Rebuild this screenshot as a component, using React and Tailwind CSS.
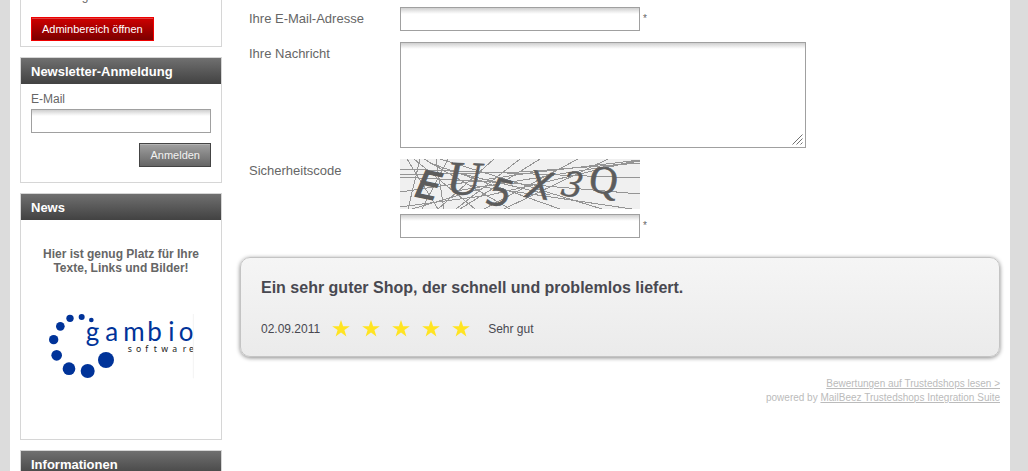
import React from "react";

const field =
  "block border border-[#a0a0a0] bg-white bg-[linear-gradient(to_bottom,#cfcfcf_0px,#f0f0f0_4px,#ffffff_6px)] px-1 text-[13px] text-[#666] outline-none";

function Box({ title, children }) {
  return (
    <section className="border border-[#d6d6d6]">
      {title && (
        <h2 className="h-[26px] bg-linear-to-b from-[#707070] to-[#424242] px-[10px] text-[13px] leading-[27px] font-bold text-white">
          {title}
        </h2>
      )}
      {children}
    </section>
  );
}

const dots = [
  [184, 255, 7],
  [155, 246, 9],
  [120, 250, 11],
  [91, 274, 13],
  [71, 314, 14],
  [80, 361, 16],
  [117, 401, 19],
  [173, 408, 21],
  [228, 375, 24],
];

function GambioLogo() {
  return (
    <svg viewBox="48 225 450 210" className="h-[70px] w-[150px]" role="img" aria-label="gambio software">
      <g fill="#003399">
        {dots.map(([x, y, r]) => (
          <circle key={x} cx={x} cy={y} r={r} />
        ))}
        <text x="167 226 280 352 415 446" y="319" fontFamily="Lato, sans-serif" fontSize="78">
          gambio
        </text>
      </g>
      <text x="293 318 346 371 394 427 458 477" y="352" fill="#222" fontFamily="'Noto Sans', sans-serif" fontSize="26">
        software
      </text>
      <path d="M490 237V430" stroke="#f3f3f3" strokeWidth="3" />
    </svg>
  );
}

const lines = [
  "M0 10 L240 19", "M0 16 L120 13 L240 4", "M0 18 L110 24 L240 35", "M0 33 L130 14 L240 1",
  "M0 48 L90 36 L235 2", "M7 0 L38 50", "M14 0 L75 50", "M24 0 L110 50", "M48 0 L22 50",
  "M94 0 L38 50", "M120 0 L56 50", "M140 0 L60 50", "M178 0 L84 50", "M208 0 L104 50",
  "M30 4 L160 50", "M40 0 L202 50", "M70 26 L232 50", "M20 0 L8 50", "M50 12 L150 36",
  "M56 32 L240 2", "M12 50 L80 30", "M36 0 L44 50",
];

function SecurityCode() {
  return (
    <svg viewBox="0 0 240 50" className="block h-[50px] w-60" role="img" aria-label="Sicherheitscode">
      <rect width="240" height="50" fill="#f0f0f0" />
      <g stroke="#959595" strokeWidth="1" fill="none" shapeRendering="crispEdges">
        {lines.map((d) => (
          <path key={d} d={d} />
        ))}
      </g>
      <g fill="#5c5c5c" stroke="#5c5c5c">
        <text transform="translate(14 37) rotate(12)" fontFamily="'DejaVu Sans', sans-serif" fontStyle="italic" fontSize="38" strokeWidth="1.2">E</text>
        <text transform="translate(46 35) rotate(2)" fontFamily="'Liberation Serif', serif" fontStyle="italic" fontSize="48" strokeWidth="0.5">U</text>
        <text transform="translate(85 44) rotate(14)" fontFamily="'DejaVu Sans', sans-serif" fontStyle="italic" fontSize="38" strokeWidth="0.4">5</text>
        <text transform="translate(125 38) rotate(8)" fontFamily="'DejaVu Sans', sans-serif" fontStyle="italic" fontSize="38" strokeWidth="0.4">X</text>
        <text transform="translate(160 36) rotate(8)" fontFamily="'DejaVu Serif', serif" fontStyle="italic" fontSize="34" strokeWidth="0.4">3</text>
        <text transform="translate(188 32) rotate(8)" fontFamily="'Liberation Serif', serif" fontSize="39" strokeWidth="0.7">Q</text>
      </g>
    </svg>
  );
}

function Star() {
  return (
    <svg viewBox="0 0 18 18" className="size-[18px]" aria-hidden="true">
      <path fill="#ffe422" d="M9 0 11.1 6.2H17.8L12.4 10.1 14.4 16.5 9 12.6 3.6 16.5 5.6 10.1 0.2 6.2H6.9Z" />
    </svg>
  );
}

function Row({ label, htmlFor, children }) {
  return (
    <div className="flex">
      <label htmlFor={htmlFor} className="w-[151px] shrink-0 text-[13px] leading-[23px]">
        {label}
      </label>
      <div>{children}</div>
    </div>
  );
}

export default function App() {
  return (
    <div className="h-screen overflow-hidden bg-[#dcdcdc] pr-[18px] pl-[10px] font-['Liberation_Sans',Arial,sans-serif] text-[#666]">
      <div className="flex min-h-full items-start gap-[18px] bg-white px-[10px]">
        <aside className="-mt-[13px] flex w-[202px] shrink-0 flex-col gap-[10px]">
          <Box>
            <div className="px-[10px] pb-[5px]">
              <p className="text-[12px] leading-4">Bewertungen: 4</p>
              <button className="mt-[13px] block h-6 border border-[#f00000] bg-linear-to-b from-[#d00000] to-[#7c0000] px-[10px] text-[11px] text-white shadow-[inset_0_1px_0_#e04040]">
                Adminbereich öffnen
              </button>
            </div>
          </Box>
          <Box title="Newsletter-Anmeldung">
            <form className="px-[10px] pt-[7px] pb-[15px]">
              <label htmlFor="newsletter" className="block text-[12px] leading-4">E-Mail</label>
              <input id="newsletter" type="email" className={`${field} mt-[2px] h-6 w-full`} />
              <button type="button" className="mt-[10px] ml-auto block h-6 border border-[#444] bg-linear-to-b from-[#a0a0a0] to-[#666] px-[10px] text-[11px] text-[#f2f2f2] shadow-[inset_0_1px_0_#b4b4b4]">
                Anmelden
              </button>
            </form>
          </Box>
          <Box title="News">
            <div className="flex flex-col items-center px-[10px] pt-[27px] pb-[59px]">
              <p className="text-center text-[12px] leading-[14px] font-bold">
                Hier ist genug Platz für Ihre
                <br />
                Texte, Links und Bilder!
              </p>
              <div className="mt-[35px] flex">
                <GambioLogo />
              </div>
            </div>
          </Box>
          <Box title="Informationen">
            <div className="h-10" />
          </Box>
        </aside>

        <main className="min-w-0 flex-1 pt-[7px]">
          <form className="flex flex-col gap-[11px] pl-[9px]">
            <Row label="Ihre E-Mail-Adresse" htmlFor="mail">
              <div className="flex items-center gap-[3px]">
                <input id="mail" type="email" className={`${field} h-6 w-60`} />
                <span className="text-[10px] leading-4">*</span>
              </div>
            </Row>
            <Row label="Ihre Nachricht" htmlFor="message">
              <div className="relative">
                <textarea id="message" className={`${field} h-[106px] w-[406px] resize-none`} />
                <svg viewBox="0 0 11 11" className="pointer-events-none absolute right-[3px] bottom-[3px] size-[11px]" aria-hidden="true">
                  <path d="M0.5 10.5 10.5 0.5M4.5 10.5 10.5 4.5M8.5 10.5 10.5 8.5" stroke="#707070" strokeWidth="1" fill="none" />
                </svg>
              </div>
            </Row>
            <Row label="Sicherheitscode" htmlFor="code">
              <SecurityCode />
              <div className="mt-[5px] flex items-center gap-[3px]">
                <input id="code" type="text" className={`${field} h-6 w-60`} />
                <span className="text-[10px] leading-4">*</span>
              </div>
            </Row>
          </form>

          <article className="mt-[19px] rounded-[10px] border border-[#c4c4c4] bg-linear-to-b from-[#f5f5f5] to-[#ebebeb] px-5 pt-5 pb-[17px] text-[#484850] shadow-[0_1px_4px_#888]">
            <h3 className="text-[16px] leading-5 font-bold">Ein sehr guter Shop, der schnell und problemlos liefert.</h3>
            <div className="mt-[21px] flex items-center text-[12px] leading-5">
              <time dateTime="2011-09-02">02.09.2011</time>
              <div className="mr-[18px] ml-3 flex gap-3">
                <Star />
                <Star />
                <Star />
                <Star />
                <Star />
              </div>
              <span>Sehr gut</span>
            </div>
          </article>

          <p className="mt-5 text-right text-[10px] leading-[14px] text-[#bbb]">
            <a href="#bewertungen" className="underline">Bewertungen auf Trustedshops lesen &gt;</a>
            <br />
            powered by <a href="#mailbeez" className="underline">MailBeez Trustedshops Integration Suite</a>
          </p>
        </main>
      </div>
    </div>
  );
}
